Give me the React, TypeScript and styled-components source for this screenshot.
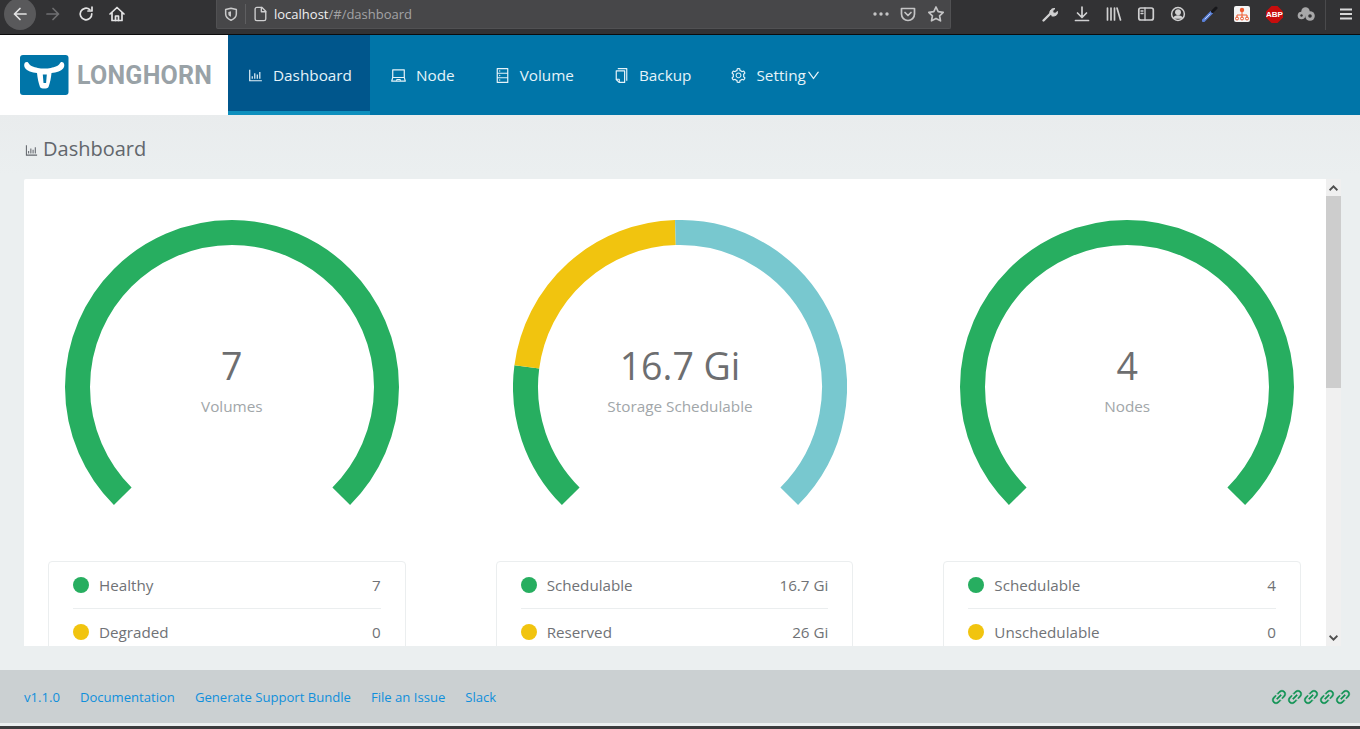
import React from 'react';
import styled, { createGlobalStyle } from 'styled-components';
import {
  AiOutlineBarChart, AiOutlineLaptop, AiOutlineDatabase, AiOutlineCopy,
  AiOutlineSetting, AiOutlineDown, AiOutlineLink,
} from 'react-icons/ai';

const Global = createGlobalStyle`
  html, body { margin: 0; padding: 0; height: 100%; overflow: hidden; }
  body { font-family: "Open Sans", "Noto Sans", sans-serif; background: #ebeff0; }
  * { box-sizing: border-box; }
`;

const Page = styled.div`
  width: 1360px; height: 729px; display: flex; flex-direction: column; overflow: hidden;
`;

/* ---------- browser chrome ---------- */
const Chrome = styled.div`
  height: 35px; flex: none; display: flex; align-items: flex-start;
  background: #323234; border-bottom: 1px solid #0c0c0d; color: #e3e3e4;
`;
const ChromeLeft = styled.div`
  width: 216px; height: 28px; flex: none; display: flex; align-items: center; padding-left: 4px;
`;
const BackCircle = styled.div`
  width: 32px; height: 32px; border-radius: 50%; background: #59595b; margin-top: -1px;
  display: flex; align-items: center; justify-content: center; flex: none;
`;
const ChromeBtn = styled.div<{ $w: number; $c?: string; $ml?: number }>`
  width: ${p => p.$w}px; height: 28px; flex: none; display: flex; align-items: center; justify-content: center;
  color: ${p => p.$c ?? 'inherit'}; margin-left: ${p => p.$ml ?? 0}px;
`;
const UrlBar = styled.div`
  width: 735px; height: 29px; flex: none; display: flex; align-items: center;
  background: #474749; border: 1px solid #515153; border-top: none; border-radius: 0 0 2px 2px;
`;
const UrlSep = styled.div`
  width: 1px; height: 20px; background: #5f5f61; margin: 0 6px 0 0;
`;
const UrlText = styled.div`
  font-size: 13px; color: #a3a3a5; margin-left: 6px; flex: 1; white-space: nowrap;
  & > b { font-weight: 400; color: #f0f0f1; }
`;
const ToolIcons = styled.div`
  margin-left: 83px; display: flex; align-items: center; height: 28px; flex: none;
`;
const ChromeDivider = styled.div`
  width: 1px; height: 30px; background: #4a4a4c; margin-left: 3px; flex: none;
`;
const AbpText = styled.text`
  font-family: "Liberation Sans", sans-serif; font-size: 8px; font-weight: 700; fill: #fff;
`;

const Ic = ({ s = 18, w = 1.7, children }: { s?: number; w?: number; children: React.ReactNode }) => (
  <svg width={s} height={s} viewBox="0 0 18 18" fill="none" stroke="currentColor" strokeWidth={w} strokeLinecap="round" strokeLinejoin="round">{children}</svg>
);

/* ---------- header ---------- */
const Header = styled.header`
  height: 80px; flex: none; display: flex; background: #0075a8;
`;
const LogoBox = styled.div`
  width: 228px; flex: none; background: #fff; display: flex; align-items: center; padding-left: 20px; gap: 8px;
`;
const LogoText = styled.span`
  font-family: Roboto, "Open Sans", sans-serif; font-weight: 700; font-size: 25px; color: #99a2a7;
  letter-spacing: 0.25px; line-height: 1;
`;
const Nav = styled.nav`
  display: flex; height: 80px;
`;
const NavItem = styled.a<{ $active?: boolean }>`
  display: flex; align-items: center; padding: 4px ${p => (p.$active ? 18 : 20)}px 0 20px; height: 80px; color: #e5f3f9;
  font-size: 15.3px; white-space: nowrap;
  background: ${p => (p.$active ? '#00568c' : 'transparent')};
  border-bottom: 4px solid ${p => (p.$active ? '#0e8fbd' : 'transparent')};
  & > svg:first-child { font-size: 17px; margin: 0 9px 0 -1px; flex: none; }
  &:nth-child(2) { padding-left: 21px; }
`;
const Chevron = styled(AiOutlineDown)`
  font-size: 15px; flex: none;
`;

/* ---------- main ---------- */
const Main = styled.main`
  flex: 1; min-height: 0; display: flex; flex-direction: column;
  padding: 0 19px 24px 24px;
  background: linear-gradient(#e9eced, #ebeff0 60px);
`;
const Title = styled.h1`
  margin: 0; height: 64px; flex: none; display: flex; align-items: center; gap: 4px;
  font-weight: 400; font-size: 20px; color: #62666c; padding-top: 3px;
  & > svg { font-size: 15px; margin-top: 3px; }
`;
const Panel = styled.section`
  flex: 1; min-height: 0; display: flex;
`;
const Scroller = styled.div`
  flex: 1; min-width: 0; background: #fff; overflow: hidden; padding: 41px 25px 0 24px;
  border-radius: 2px 0 0 0;
`;
const Columns = styled.div`
  display: grid; grid-template-columns: repeat(3, 1fr); column-gap: 90px;
`;
const Track = styled.div`
  width: 15px; flex: none; background: #f0f0f0; display: flex; flex-direction: column; align-items: center;
`;
const TrackArrow = styled.div`
  height: 17px; flex: none; display: flex; align-items: center; justify-content: center;
`;
const Thumb = styled.div`
  width: 15px; height: 192px; flex: none; background: #cdcdcd;
`;
const TrackRest = styled.div`
  flex: 1;
`;

const GaugeWrap = styled.div<{ $nudge: number }>`
  position: relative; height: 341px; padding-left: ${p => p.$nudge}px;
  display: flex; justify-content: center; align-items: flex-start;
`;
const GaugeText = styled.div<{ $nudge: number }>`
  position: absolute; left: ${p => p.$nudge}px; right: 0; top: 119px; text-align: center;
`;
const GaugeValue = styled.div`
  font-size: 37.5px; line-height: 54px; color: #6d6e70;
`;
const GaugeLabel = styled.div`
  font-size: 15.3px; line-height: 24px; color: #a1a6a9; margin-top: 1px;
`;

const Card = styled.div`
  border: 1px solid #ebeeef; border-radius: 4px; padding: 0 24px;
`;
const Row = styled.div<{ $last?: boolean }>`
  height: ${p => (p.$last ? 46 : 47)}px; display: flex; align-items: center; font-size: 15.2px; color: #707276;
  border-bottom: ${p => (p.$last ? 'none' : '1px solid #ebeeef')};
`;
const Dot = styled.span<{ $c: string }>`
  width: 16px; height: 16px; border-radius: 50%; background: ${p => p.$c}; flex: none; margin-right: 10px;
`;
const RowLabel = styled.span`
  flex: 1;
`;

/* ---------- footer ---------- */
const Footer = styled.footer`
  height: 53px; flex: none; display: flex; align-items: center; justify-content: space-between;
  background: #cbd0d2; padding: 0 8px 0 24px;
`;
const FooterLinks = styled.div`
  display: flex; gap: 20px; font-size: 13.1px; color: #0f8fdc;
`;
const FooterIcons = styled.div`
  display: flex; color: #0b9150;
  & > svg { display: block; font-size: 18px; margin-left: -2px; stroke: currentColor; stroke-width: 28px; }
`;
const BottomStrip = styled.div`
  height: 3px; flex: none; background: #ebeff0;
`;
const BottomDark = styled.div`
  height: 3px; flex: none; background: #3c3c3e;
`;

/* ---------- gauge ---------- */
const R = 154.5;
const CX = 167;
const CY = 167;
const pt = (deg: number) => {
  const a = ((deg - 90) * Math.PI) / 180;
  return [CX + R * Math.cos(a), CY + R * Math.sin(a)];
};
const arc = (from: number, to: number) => {
  const [x1, y1] = pt(from);
  const [x2, y2] = pt(to);
  return `M${x1} ${y1}A${R} ${R} 0 ${to - from > 180 ? 1 : 0} 1 ${x2} ${y2}`;
};
type Seg = { c: string; from: number; to: number };
const Gauge = ({ segs, value, label, nudge }: { segs: Seg[]; value: string; label: string; nudge: number }) => (
  <GaugeWrap $nudge={nudge}>
    <svg width="334" height="300" viewBox="0 0 334 300">
      {segs.map(s => (
        <path key={s.c} d={arc(s.from, s.to)} fill="none" stroke={s.c} strokeWidth="25" />
      ))}
    </svg>
    <GaugeText $nudge={nudge}>
      <GaugeValue>{value}</GaugeValue>
      <GaugeLabel>{label}</GaugeLabel>
    </GaugeText>
  </GaugeWrap>
);

const green = '#27ae60';
const yellow = '#f1c40f';
const blue = '#78c8cf';

const columns = [
  {
    segs: [{ c: green, from: -135, to: 135 }], value: '7', label: 'Volumes', nudge: 10,
    rows: [{ c: green, l: 'Healthy', v: '7' }, { c: yellow, l: 'Degraded', v: '0' }],
  },
  {
    segs: [
      { c: green, from: -135, to: -82.5 },
      { c: yellow, from: -82.5, to: -1.7 },
      { c: blue, from: -1.7, to: 135 },
    ],
    value: '16.7 Gi', label: 'Storage Schedulable', nudge: 11,
    rows: [{ c: green, l: 'Schedulable', v: '16.7 Gi' }, { c: yellow, l: 'Reserved', v: '26 Gi' }],
  },
  {
    segs: [{ c: green, from: -135, to: 135 }], value: '4', label: 'Nodes', nudge: 10,
    rows: [{ c: green, l: 'Schedulable', v: '4' }, { c: yellow, l: 'Unschedulable', v: '0' }],
  },
];

const LogoMark = () => (
  <svg width="49" height="40" viewBox="0 0 49 40">
    <rect width="48.5" height="40" rx="3" fill="#0075a8" />
    <path
      d="M5 7.5C4 9 3.8 11 5 13c2 3 7 4.5 12 5 .5 5 1.5 10 3 14 1 2 7.500 2 8.500 0 1.500-4 2.500-9 3-14 5-.5 10-2 12-5 1.200-2 1-4-.2-5.500-1.500-1-3-.5-3.500 1-1 2.500-5 3.500-9 4.500-4 .8-9 .8-13 0-4-1-8-2-9-4.500-.5-1.500-2-2-3.800-1z"
      fill="#fff"
    />
    <path d="M22.8 19.5h4l-.7 8.500h-2.600z" fill="#0075a8" />
  </svg>
);

export default function App() {
  return (
    <Page>
      <Global />
      <Chrome>
        <ChromeLeft>
          <BackCircle>
            <Ic><path d="M15 9H3.5M9 3.5 3.5 9 9 14.5" /></Ic>
          </BackCircle>
          <ChromeBtn $w={34} $c="#6f6f71">
            <Ic><path d="M3 9h11.5M9 3.5 14.5 9 9 14.5" /></Ic>
          </ChromeBtn>
          <ChromeBtn $w={31} $c="#e3e3e4">
            <Ic><path d="M14.8 8.8A5.8 5.8 0 1 1 12.8 4.6" /><path d="M15 2v4h-4" /></Ic>
          </ChromeBtn>
          <ChromeBtn $w={32} $c="#e3e3e4">
            <Ic><path d="M2 9 9 2.5 16 9M4 7.5V15.5h10V7.5" /><path d="M7.5 15.5V11h3v4.500" /></Ic>
          </ChromeBtn>
        </ChromeLeft>
        <UrlBar>
          <ChromeBtn $w={28} $c="#c9c9ca">
            <Ic s={16}><path d="M9 2.5 3 4v5c0 3.500 2.500 5.500 6 7 3.500-1.500 6-3.500 6-7V4z" /><path d="M9 6 6 6.800V9c0 1.500 1.200 2.500 3 3.200z" fill="currentColor" stroke="none" /></Ic>
          </ChromeBtn>
          <UrlSep />
          <ChromeBtn $w={16} $c="#d0d0d1">
            <Ic s={16} w={1.5}><path d="M3.500 3.500a2 2 0 0 1 2-2h5.500L15.500 6v8.500a2 2 0 0 1-2 2h-8a2 2 0 0 1-2-2z" /><path d="M10.500 1.500V6.500h5" /></Ic>
          </ChromeBtn>
          <UrlText><b>localhost</b>/#/dashboard</UrlText>
          <ChromeBtn $w={26} $c="#c4c4c5">
            <svg width="18" height="6" viewBox="0 0 18 6" fill="currentColor"><circle cx="3" cy="3" r="1.7" /><circle cx="9" cy="3" r="1.7" /><circle cx="15" cy="3" r="1.7" /></svg>
          </ChromeBtn>
          <ChromeBtn $w={28} $c="#c4c4c5">
            <Ic><path d="M2.500 3.500h13V9a6.500 6.500 0 0 1-13 0z" /><path d="M6 7.500 9 10.500l3-3" /></Ic>
          </ChromeBtn>
          <ChromeBtn $w={28} $c="#c4c4c5">
            <Ic><path d="m9 2 2.200 4.600 5 .7-3.600 3.500.9 5L9 13.400l-4.500 2.400.9-5L1.800 7.300l5-.7z" /></Ic>
          </ChromeBtn>
        </UrlBar>
        <ToolIcons>
          <ChromeBtn $w={32} $c="#d0d0d1">
            <Ic><path d="M2.500 15.500 9 9" strokeWidth="2.4" /><path d="M9 9c-1-3 1.500-6 5-5.500l-2.300 2.300.4 2.100 2.100.4L16.500 6.500c.5 3.500-2.500 5-5.500 4.500" fill="currentColor" strokeWidth="1" /></Ic>
          </ChromeBtn>
          <ChromeBtn $w={32} $c="#d0d0d1">
            <Ic><path d="M9 2v10M4.500 8 9 12.500 13.500 8M2.500 15.500h13" /></Ic>
          </ChromeBtn>
          <ChromeBtn $w={32} $c="#d0d0d1">
            <Ic><path d="M2.500 3v12M6 3v12M9.500 3v12M12 3l3.500 12" /></Ic>
          </ChromeBtn>
          <ChromeBtn $w={32} $c="#d0d0d1">
            <Ic><rect x="1.8" y="3" width="14.5" height="12" rx="2" /><path d="M8 3v12M4 6h2M4 8.500h2" strokeWidth="1.3" /></Ic>
          </ChromeBtn>
          <ChromeBtn $w={32} $c="#d0d0d1">
            <Ic s={16}><circle cx="9" cy="9" r="7.2" /><circle cx="9" cy="7" r="2.5" fill="currentColor" /><path d="M4.500 13.500c1-3 8-3 9 0z" fill="currentColor" /></Ic>
          </ChromeBtn>
          <ChromeBtn $w={32}>
            <svg width="16" height="16" viewBox="0 0 16 16" fill="none" strokeLinecap="round">
              <path d="M1.500 14.500 9.500 6.500" stroke="#5a80d8" strokeWidth="3.2" />
              <path d="M3 13 8 8" stroke="#c8d6f4" strokeWidth="1" />
              <path d="M10.500 5.500 14 2" stroke="#17171a" strokeWidth="3" />
            </svg>
          </ChromeBtn>
          <ChromeBtn $w={32}>
            <svg width="16" height="16" viewBox="0 0 16 16"><rect width="16" height="16" rx="2" fill="#f5f5f5" /><circle cx="8" cy="4" r="2.2" fill="#ee5a30" /><path d="M8 6v3M3 12V9h10v3M8 9v3" stroke="#ee5a30" fill="none" /><circle cx="3" cy="12.5" r="1.5" fill="none" stroke="#ee5a30" /><circle cx="8" cy="12.5" r="1.5" fill="none" stroke="#ee5a30" /><circle cx="13" cy="12.5" r="1.5" fill="none" stroke="#ee5a30" /></svg>
          </ChromeBtn>
          <ChromeBtn $w={32}>
            <svg width="17" height="17" viewBox="0 0 17 17"><path d="M5.500 0h6L17 5.500v6L11.500 17h-6L0 11.500v-6z" fill="#c70d0d" /><AbpText x="8.5" y="11.3" textAnchor="middle">ABP</AbpText></svg>
          </ChromeBtn>
          <ChromeBtn $w={32} $c="#a8a8a9">
            <svg width="18" height="16" viewBox="0 0 18 16" fill="currentColor"><circle cx="4.5" cy="9.5" r="3.8" /><circle cx="8.5" cy="5.5" r="4.2" /><circle cx="13" cy="10" r="4.8" /><circle cx="13" cy="10" r="1.8" fill="#323234" /><circle cx="4.5" cy="9.5" r="1.2" fill="#323234" /></svg>
          </ChromeBtn>
        </ToolIcons>
        <ChromeDivider />
        <ChromeBtn $w={28} $c="#d8d8d9" $ml={6}>
          <Ic w={2}><path d="M3 4.500h12M3 9h12M3 13.500h12" strokeLinecap="butt" /></Ic>
        </ChromeBtn>
      </Chrome>

      <Header>
        <LogoBox>
          <LogoMark />
          <LogoText>LONGHORN</LogoText>
        </LogoBox>
        <Nav>
          <NavItem $active><AiOutlineBarChart />Dashboard</NavItem>
          <NavItem><AiOutlineLaptop />Node</NavItem>
          <NavItem><AiOutlineDatabase />Volume</NavItem>
          <NavItem><AiOutlineCopy />Backup</NavItem>
          <NavItem><AiOutlineSetting />Setting<Chevron /></NavItem>
        </Nav>
      </Header>

      <Main>
        <Title><AiOutlineBarChart />Dashboard</Title>
        <Panel>
          <Scroller>
            <Columns>
              {columns.map(col => (
                <div key={col.label}>
                  <Gauge segs={col.segs} value={col.value} label={col.label} nudge={col.nudge} />
                  <Card>
                    {col.rows.map((r, i) => (
                      <Row key={r.l} $last={i === col.rows.length - 1}>
                        <Dot $c={r.c} />
                        <RowLabel>{r.l}</RowLabel>
                        <span>{r.v}</span>
                      </Row>
                    ))}
                  </Card>
                </div>
              ))}
            </Columns>
          </Scroller>
          <Track>
            <TrackArrow>
              <svg width="9" height="6" viewBox="0 0 9 6" fill="#505050"><path d="M4.500 0 9 4.500 7.800 6 4.500 2.700 1.200 6 0 4.500z" /></svg>
            </TrackArrow>
            <Thumb />
            <TrackRest />
            <TrackArrow>
              <svg width="9" height="6" viewBox="0 0 9 6" fill="#505050"><path d="M4.500 6 9 1.500 7.800 0 4.500 3.300 1.200 0 0 1.500z" /></svg>
            </TrackArrow>
          </Track>
        </Panel>
      </Main>

      <Footer>
        <FooterLinks>
          <span>v1.1.0</span>
          <span>Documentation</span>
          <span>Generate Support Bundle</span>
          <span>File an Issue</span>
          <span>Slack</span>
        </FooterLinks>
        <FooterIcons>
          <AiOutlineLink /><AiOutlineLink /><AiOutlineLink /><AiOutlineLink /><AiOutlineLink />
        </FooterIcons>
      </Footer>
      <BottomStrip />
      <BottomDark />
    </Page>
  );
}
